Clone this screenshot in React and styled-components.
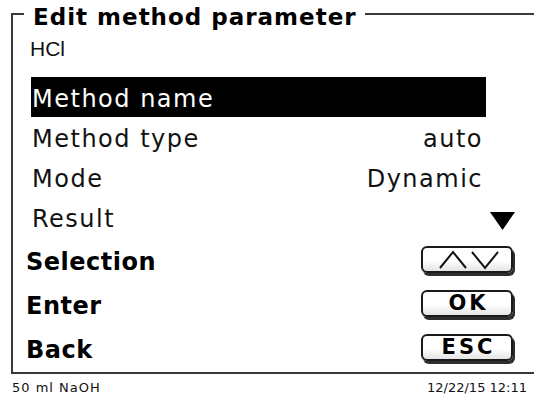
import React from 'react';
import styled, { createGlobalStyle } from 'styled-components';

const GlobalStyle = createGlobalStyle`
  body {
    margin: 0;
    background: #fff;
    font-family: "DejaVu Sans", Verdana, sans-serif;
    color: #111;
  }
`;

const Screen = styled.div`
  width: 534px;
  height: 399px;
  background: #fff;
  display: flex;
  flex-direction: column;
  overflow: hidden;
`;

const Frame = styled.div`
  margin: 13px 0 0 11px;
  height: 357px;
  border: 2px solid #3a3a3a;
  border-right: none;
  display: flex;
  flex-direction: column;
`;

const Title = styled.div`
  align-self: flex-start;
  margin: -11px 0 0 11px;
  padding: 0 8px 0 9px;
  height: 26px;
  line-height: 26px;
  background: #fff;
  font-size: 23px;
  font-weight: bold;
  letter-spacing: 1px;
  color: #000;
`;

const Subtitle = styled.div`
  margin: 8px 0 0 17px;
  height: 22px;
  line-height: 22px;
  font-family: "Liberation Sans", Arial, sans-serif;
  font-size: 21px;
`;

const List = styled.div`
  margin: 17px 0 0 18px;
  display: flex;
  flex-direction: column;
`;

const Row = styled.div`
  display: grid;
  grid-template-columns: 455px 30px;
  height: 40px;
`;

const Cell = styled.div`
  display: flex;
  justify-content: space-between;
  padding: 4px 3px 0 1px;
  line-height: 36px;
  font-size: 24px;
  letter-spacing: 1.5px;
  background: ${(p) => (p.$active ? '#000' : 'transparent')};
  color: ${(p) => (p.$active ? '#fff' : '#111')};
`;

const Indicator = styled.svg`
  margin: 15px 0 0 4px;
  width: 25px;
  height: 18px;
`;

const Actions = styled.div`
  margin-top: 3px;
  display: flex;
  flex-direction: column;
`;

const ActionRow = styled.div`
  display: flex;
  justify-content: space-between;
  align-items: flex-start;
  height: 44px;
  padding: 0 21px 0 13px;
`;

const ActionLabel = styled.span`
  line-height: 44px;
  font-size: 24px;
  font-weight: bold;
  letter-spacing: 0.5px;
  color: #000;
`;

const KeyButton = styled.div`
  margin-top: 6px;
  width: 92px;
  height: 27px;
  box-sizing: border-box;
  border: 2px solid #1a1a1a;
  border-radius: 6px;
  background: linear-gradient(#ffffff 55%, #e4e4e4);
  box-shadow: 2px 3px 0 #2e2e2e;
  display: flex;
  align-items: center;
  justify-content: center;
  font-size: 21px;
  font-weight: bold;
  letter-spacing: 3px;
  color: #000;
  line-height: 1;
  padding-left: 3px;
`;

const Footer = styled.div`
  display: flex;
  justify-content: space-between;
  height: 25px;
  padding: 2px 7px 0 12px;
  box-sizing: border-box;
  line-height: 23px;
  font-size: 13px;
`;

const FooterText = styled.span`
  letter-spacing: ${(p) => p.$spacing || 0}px;
`;

const rows = [
  { label: 'Method name', value: '', active: true },
  { label: 'Method type', value: 'auto' },
  { label: 'Mode', value: 'Dynamic' },
  { label: 'Result', value: '', more: true },
];

const Arrows = () => (
  <svg width="62" height="20" viewBox="0 0 62 20">
    <path d="M2 18 L15 2 L28 18" fill="none" stroke="#111" strokeWidth="2" />
    <path d="M34 2 L47 18 L60 2" fill="none" stroke="#111" strokeWidth="2" />
  </svg>
);

const App = () => (
  <>
    <GlobalStyle />
    <Screen>
      <Frame>
        <Title>Edit method parameter</Title>
        <Subtitle>HCl</Subtitle>
        <List>
          {rows.map((r) => (
            <Row key={r.label}>
              <Cell $active={r.active}>
                <span>{r.label}</span>
                <span>{r.value}</span>
              </Cell>
              {r.more && (
                <Indicator viewBox="0 0 25 18">
                  <polygon points="0,0 25,0 12.5,18" fill="#000" />
                </Indicator>
              )}
            </Row>
          ))}
        </List>
        <Actions>
          <ActionRow>
            <ActionLabel>Selection</ActionLabel>
            <KeyButton><Arrows /></KeyButton>
          </ActionRow>
          <ActionRow>
            <ActionLabel>Enter</ActionLabel>
            <KeyButton>OK</KeyButton>
          </ActionRow>
          <ActionRow>
            <ActionLabel>Back</ActionLabel>
            <KeyButton>ESC</KeyButton>
          </ActionRow>
        </Actions>
      </Frame>
      <Footer>
        <FooterText $spacing={1}>50 ml NaOH</FooterText>
        <FooterText>12/22/15 12:11</FooterText>
      </Footer>
    </Screen>
  </>
);

export default App;
